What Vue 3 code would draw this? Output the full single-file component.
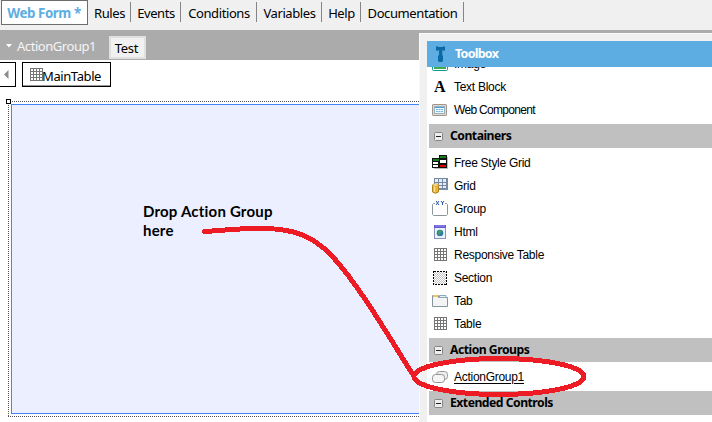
<script setup>
const tabs = [
  { name: 'Rules', w: 43 },
  { name: 'Events', w: 50 },
  { name: 'Conditions', w: 76 },
  { name: 'Variables', w: 65 },
  { name: 'Help', w: 39 },
  { name: 'Documentation', w: 103 },
]
const groups = [
  { title: '', cls: 'first', items: [
    { name: 'Image', icon: 'image' },
    { name: 'Text Block', icon: 'text' },
    { name: 'Web Component', icon: 'web', tight: true },
  ] },
  { title: 'Containers', cls: 'containers', items: [
    { name: 'Free Style Grid', icon: 'free' },
    { name: 'Grid', icon: 'grid' },
    { name: 'Group', icon: 'group' },
    { name: 'Html', icon: 'html' },
    { name: 'Responsive Table', icon: 'table' },
    { name: 'Section', icon: 'section' },
    { name: 'Tab', icon: 'tab' },
    { name: 'Table', icon: 'table' },
  ] },
  { title: 'Action Groups', cls: 'actions', items: [
    { name: 'ActionGroup1', icon: 'action', link: true },
  ] },
  { title: 'Extended Controls', cls: 'extended', items: [] },
]
</script>

<template>
  <div class="window">
    <nav class="tabs">
      <div class="tab active"><span>Web Form *</span></div>
      <div v-for="t in tabs" :key="t.name" class="tab" :style="{ width: t.w + 'px' }"><span>{{ t.name }}</span></div>
    </nav>
    <div class="groupbar">
      <svg class="arrow" width="6" height="4" viewBox="0 0 6 4"><path d="M0 0h6L3 3.4z" fill="#fff" /></svg>
      <span class="gname">ActionGroup1</span>
      <button class="test"><span>Test</span></button>
    </div>
    <div class="path">
      <div class="back"><svg width="5" height="9" viewBox="0 0 5 9"><path d="M4.5 0v9L0 4.5z" fill="#8c8c8c" /></svg></div>
      <div class="crumb">
        <svg width="13" height="13" viewBox="0 0 13 13" shape-rendering="crispEdges"><path d="M0 .5h13M0 3.5h13M0 6.5h13M0 9.5h13M0 12.5h13M.5 0v13M3.5 0v13M6.5 0v13M9.5 0v13M12.5 0v13" stroke="#757575" fill="none" /></svg>
        <span>MainTable</span>
      </div>
    </div>
    <div class="canvas">
      <div class="drop"><p>Drop Action Group<br>here</p></div>
      <svg class="outline" width="413" height="319" viewBox="0 0 413 319" shape-rendering="crispEdges">
        <path d="M2.5 317V2.5M2 2.5h411M2 317.5h411" stroke="#555" stroke-dasharray="1 1" fill="none" />
        <rect x=".5" y=".5" width="4" height="4" fill="#fff" stroke="#000" />
      </svg>
    </div>

    <aside class="toolbox">
      <header>
        <svg width="9" height="16" viewBox="0 0 9 16"><path d="M0 1l1-1 1.500 1h4L8 0l1 1v3L8 5 6.300 4v5L7 10v5L6 16H3l-1-1v-5l1-1V4L1 5 0 4z" fill="#0b69a5" /></svg>
        <span>Toolbox</span>
      </header>
      <div class="list">
        <section v-for="g in groups" :key="g.cls" :class="g.cls">
          <h3 v-if="g.title">
            <svg width="9" height="9" viewBox="0 0 9 9"><rect x=".5" y=".5" width="8" height="8" rx="1" fill="#eee" stroke="#858585" /><path d="M2 4.500h5" stroke="#222" /></svg>
            <span>{{ g.title }}</span>
          </h3>
          <ul v-if="g.items.length">
            <li v-for="i in g.items" :key="i.name">
              <svg class="icon" width="16" height="16" viewBox="0 0 16 16">
                <g v-if="i.icon === 'image'"><rect x=".5" y="2.500" width="15" height="12" rx="1" fill="#fff" stroke="#139a91" /><path d="M2 11h12v2H2z" fill="#3fae4c" /></g>
                <text v-else-if="i.icon === 'text'" x="2" y="13" class="glyph">A</text>
                <g v-else-if="i.icon === 'web'"><rect x=".5" y="2.500" width="14" height="11" rx=".6" fill="#dcd8d2" stroke="#a0968c" /><rect x="2.500" y="4.500" width="10" height="7" fill="#edf8fc" stroke="#9bb0bd" /><path d="M3 5.500h9" stroke="#4ba1d8" /><path d="M4 7.500h7M4 9.500h7" stroke="#72b9d9" stroke-dasharray="2 .5" /></g>
                <g v-else-if="i.icon === 'free'" shape-rendering="crispEdges"><path d="M15.500 2v12M2 13.500h13" stroke="#bbb" fill="none" /><path d="M0 3h7V0h8v13H0z" fill="#111" /><path d="M1 4h6v2H1zM8 1h6v2H8z" fill="#108020" /><path d="M1 7h5v2H1zM1 10h5v2H1zM8 5h6v3H8z" fill="#fff" /><path d="M8 10.500l1 1 1-1 1 1 1-1 1 1 1-1" stroke="#e00000" fill="none" /></g>
                <g v-else-if="i.icon === 'grid'"><path d="M2 0h14v12H2z" fill="#7889a2" /><path d="M3 1h3v3H3zM7 1h3v3H7zM11 1h3v3h-3zM3 5h3v2H3zM7 5h3v2H7zM11 5h3v2h-3zM7 8h3v2H7zM11 8h3v2h-3z" fill="#e3edfb" /><path d="M.5 7v7q3 2.500 6 0V7z" fill="#f0b732" stroke="#b18122" /><path d="M2.500 8v6" stroke="#ffe58b" /><ellipse cx="3.500" cy="7" rx="3" ry="1.200" fill="#ffe595" stroke="#bf963a" stroke-width=".6" /></g>
                <g v-else-if="i.icon === 'group'"><path d="M3 2.500H1.500l-1 1v10l1 1h13l1-1v-10l-1-1H13" stroke="#8b969b" fill="none" /><path d="M4 0l3 4M7 0L4 4M9 0l1.500 2L12 0M10.500 2v2" stroke="#2453b1" fill="none" /></g>
                <g v-else-if="i.icon === 'html'"><rect x="2.500" y="1.500" width="11" height="13" fill="#edf3fd" stroke="#8695b7" /><path d="M2 1h12v3H2z" fill="#6559cf" /><path d="M3 2h10" stroke="#9c92ef" /><circle cx="8" cy="9" r="3.300" fill="#347aa1" /><path d="M6 7l3-1 1 2-2 1v2L6 10z" fill="#37a368" /></g>
                <path v-else-if="i.icon === 'table'" shape-rendering="crispEdges" d="M2 1.500h13M2 4.500h13M2 7.500h13M2 10.500h13M2 13.500h13M2.500 1v13M5.500 1v13M8.500 1v13M11.500 1v13M14.500 1v13" stroke="#757575" fill="none" />
                <g v-else-if="i.icon === 'section'" shape-rendering="crispEdges"><path v-for="n in 12" :key="n" :d="`M2 ${n + 1.5}h12`" stroke="#c4c4c4" stroke-dasharray="1 1" :stroke-dashoffset="n % 2" /><rect x="1.500" y="1.500" width="13" height="13" fill="none" stroke="#000" stroke-dasharray="2 1" /></g>
                <g v-else-if="i.icon === 'tab'"><path d="M.5 13.500v-11h6v2h9v9z" fill="#f4f4f4" stroke="#84949c" /><path d="M7.500 2.500h6.500v2H7.500z" fill="#e5f1fa" stroke="#8daabd" /><path d="M1 2h5v2H1z" fill="#f2c45e" /></g>
                <g v-else><rect x="4.500" y="2.500" width="11" height="8" rx="3" fill="#ededed" stroke="#999" /><rect x=".5" y="5.500" width="12" height="8" rx="3" fill="#f5f5f5" stroke="#929292" /></g>
              </svg>
              <span :class="{ link: i.link, tight: i.tight }">{{ i.name }}</span>
            </li>
          </ul>
        </section>
      </div>
    </aside>

    <svg class="marker" width="712" height="422" viewBox="0 0 712 422" shape-rendering="crispEdges">
      <path d="M204.500 231.500C222 230.500 240 228 264 228.500C293 229 312 235 332 256C359 285 389 337 412.500 374" />
      <ellipse cx="499" cy="376.500" rx="85" ry="18" />
    </svg>
  </div>
</template>

<style>
body { margin: 0; overflow: hidden; }
</style>
<style scoped>
.window { position: relative; width: 712px; height: 422px; overflow: hidden; background: #fff; font: 13.3px/18px "Noto Sans", sans-serif; color: #000; white-space: nowrap; }
.tabs { display: flex; height: 30px; background: #f0f0f0; padding-left: 1px; box-sizing: border-box; }
.tab { position: relative; box-sizing: border-box; height: 26px; text-align: center; padding-top: 4px; font-size: 13px; letter-spacing: -.4px; }
.tab:not(.active)::after { content: ""; position: absolute; right: 0; top: 2px; width: 1px; height: 20px; background: #858585; }
.tab.active { width: 87px; height: 25px; border: 1px solid #6d6d6d; background: #fff; color: #5dade2; font-weight: 700; padding: 3px 1px 0 0; font-size: 13.3px; }
.groupbar { height: 30px; display: flex; background: #ababab; color: #f5f5f5; }
.arrow { margin: 14px 0 0 6px; }
.gname { margin: 7px 0 0 5px; width: 92px; font-size: 13px; letter-spacing: -.45px; }
.test { margin: 6px 0 0; padding: 0 2px 0 0; width: 37px; height: 23px; border: 2px solid #e0e0e0; background: #f1f1f1; font: 13px/18px "Noto Sans", sans-serif; letter-spacing: -.3px; color: #000; }
.path { display: flex; height: 39px; padding-top: 2px; box-sizing: border-box; gap: 6px; }
.back { box-sizing: border-box; width: 16px; height: 25px; border: 1px solid #000; border-left: 0; display: flex; align-items: center; padding-left: 4px; }
.crumb { box-sizing: border-box; width: 89px; height: 25px; border: 1px solid #000; box-shadow: inset 0 -1px #999; display: flex; align-items: center; padding-left: 7px; }
.crumb span { font-size: 13px; letter-spacing: -.4px; margin: 3px 0 0 -1px; }
.canvas { position: relative; height: 323px; padding: 5px 0 0 11px; box-sizing: border-box; }
.drop { box-sizing: border-box; width: 420px; height: 310px; border: 1px solid #4285f4; background: #ebefff; padding: 97px 0 0 131px; }
.drop p { margin: 0; font: 700 15px/19px Lato, sans-serif; letter-spacing: .2px; }
.outline { position: absolute; left: 6px; top: 0; }
.toolbox { position: absolute; left: 419px; top: 33px; width: 293px; height: 389px; box-sizing: border-box; padding: 7px 0 0 7px; background: #f0f0f0; border: solid #fafafa; border-width: 1px 0 0 1px; }
.toolbox header { height: 26px; background: #5dade2; color: #fff; display: flex; align-items: center; padding-left: 9px; font-weight: 700; font-size: 12.5px; }
.toolbox header span { margin-left: 10px; letter-spacing: -.75px; }
.list { height: 355px; background: #fff; overflow: hidden; padding-left: 2px; }
h3 { margin: 0; height: 24px; background: #c0c0c0; display: flex; align-items: center; padding-left: 5px; font: 700 12.2px/18px "Noto Sans", sans-serif; letter-spacing: -.5px; }
h3 span { margin-left: 7px; }
ul { list-style: none; margin: 0; padding: 0 0 0 3px; }
li { height: 23px; display: flex; align-items: center; font: 12px/16px "Liberation Sans", sans-serif; letter-spacing: -.28px; }
li span { margin-left: 6px; }
li .tight { letter-spacing: -.68px; }
.icon { flex: none; overflow: visible; }
.glyph { font: 700 16px "Liberation Serif", serif; }
.first { display: flow-root; height: 57px; }
.first ul { margin-top: -15px; }
.containers { height: 214px; }
.containers ul { padding-top: 3px; }
.actions { height: 53px; }
.actions ul { padding-top: 3px; }
.link { text-decoration: underline; text-underline-offset: 2px; }
.marker { position: absolute; left: 0; top: 0; pointer-events: none; fill: none; stroke: #ed1c24; stroke-width: 5; stroke-linecap: round; }
</style>
